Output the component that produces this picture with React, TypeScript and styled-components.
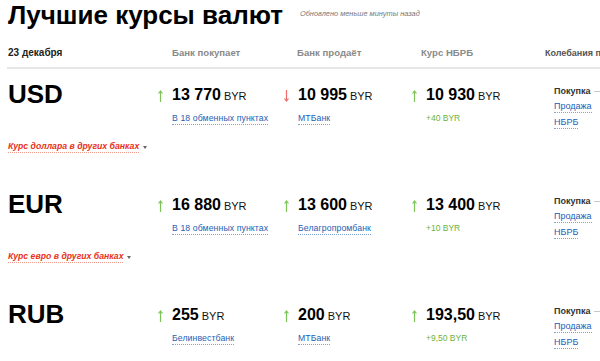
import styled, { createGlobalStyle } from 'styled-components';

const GlobalStyle = createGlobalStyle`
  html, body {
    margin: 0;
    padding: 0;
    background: #fff;
    overflow: hidden;
    font-family: 'Liberation Sans', Arial, sans-serif;
  }
`;

const COLUMNS = '150px 126px 128px 132px 1fr';

const Page = styled.div`
  width: 760px;
  padding-left: 8px;
  color: #000;
`;

const TitleRow = styled.div`
  display: flex;
  align-items: baseline;
  gap: 17px;
  height: 36px;
`;

const Title = styled.h1`
  margin: 0;
  font-size: 26px;
  line-height: 30px;
  font-weight: bold;
`;

const Updated = styled.span`
  font-size: 7.4px;
  font-style: italic;
  color: #777;
  position: relative;
  top: -8px;
`;

const HeaderRow = styled.div`
  display: grid;
  grid-template-columns: ${COLUMNS};
  margin-top: 10px;
  margin-left: -1px;
  padding: 0 0 7px 1px;
  line-height: 14px;
  border-bottom: 2px solid #e6e6e6;
`;

const DateCell = styled.div`
  font-size: 10px;
  font-weight: bold;
  color: #222;
`;

const HeadCell = styled.div<{ $indent: number; $small?: boolean }>`
  padding-left: ${(p) => p.$indent}px;
  font-size: ${(p) => (p.$small ? 9 : 9.6)}px;
  font-weight: bold;
  color: ${(p) => (p.$small ? '#555' : '#8a8a8a')};
  white-space: nowrap;
  overflow: hidden;
`;

const Block = styled.section`
  height: 110px;
  display: flex;
  flex-direction: column;
`;

const Row = styled.div`
  display: grid;
  grid-template-columns: ${COLUMNS};
  margin-top: 10px;
  height: 52px;
`;

const Code = styled.div`
  font-size: 26px;
  line-height: 30px;
  font-weight: bold;
`;

const RateCell = styled.div`
  display: flex;
  align-items: flex-start;
`;

const ArrowBox = styled.div`
  width: 14px;
  margin-top: 9px;
  flex-shrink: 0;
`;

const RateBody = styled.div`
  display: flex;
  flex-direction: column;
  align-items: flex-start;
`;

const Value = styled.div`
  margin-top: 6px;
  line-height: 20px;
  font-size: 16px;
  font-weight: bold;
  white-space: nowrap;
`;

const Unit = styled.span`
  font-size: 11px;
  font-weight: normal;
  margin-left: 3px;
  color: #111;
`;

const Link = styled.a`
  margin-top: 6px;
  font-size: 8.7px;
  line-height: 12px;
  letter-spacing: 0.1px;
  color: #2261b5;
  text-decoration: none;
  border-bottom: 1px dotted #7ea3d6;
  white-space: nowrap;
  cursor: pointer;
`;

const Delta = styled.div`
  margin-top: 6px;
  font-size: 8.5px;
  line-height: 13px;
  color: #6bb43c;
`;

const Swing = styled.div`
  display: flex;
  padding-left: 10px;
  margin-top: 4px;
`;

const SwingLabels = styled.div`
  display: flex;
  flex-direction: column;
  width: 40px;
`;

const SwingItem = styled.div`
  height: 16px;
  display: flex;
  align-items: center;
`;

const SwingText = styled.span<{ $active?: boolean }>`
  font-size: 9px;
  line-height: 11px;
  font-weight: ${(p) => (p.$active ? 'bold' : 'normal')};
  color: ${(p) => (p.$active ? '#333' : '#2261b5')};
  border-bottom: ${(p) => (p.$active ? 'none' : '1px dotted #7ea3d6')};
`;

const OtherBanks = styled.div`
  margin-top: 9px;
  display: flex;
  align-items: center;
  gap: 4px;
  line-height: 14px;
`;

const OtherLink = styled.a`
  font-size: 8.7px;
  font-style: italic;
  font-weight: bold;
  color: #e8321b;
  border-bottom: 1px dotted #f09a8e;
  line-height: 12px;
  cursor: pointer;
`;

const Caret = styled.span`
  width: 0;
  height: 0;
  border-left: 2.5px solid transparent;
  border-right: 2.5px solid transparent;
  border-top: 3px solid #666;
  margin-top: 2px;
`;

const Arrow = ({ up }: { up: boolean }) => (
  <svg width="5" height="12" viewBox="0 0 5 12">
    {up ? (
      <path d="M2.5 1 V12 M0.5 3.5 L2.5 1 L4.5 3.5" stroke="#7cc35a" strokeWidth="1.2" fill="none" />
    ) : (
      <path d="M2.5 0 V11 M0.5 8.5 L2.5 11 L4.5 8.5" stroke="#f06a6a" strokeWidth="1.2" fill="none" />
    )}
  </svg>
);

type Rate = { value: string; up: boolean; link?: string; delta?: string };

type Currency = {
  code: string;
  other?: string;
  buy: Rate;
  sell: Rate;
  nb: Rate;
};

const data: Currency[] = [
  {
    code: 'USD',
    other: 'Курс доллара в других банках',
    buy: { value: '13 770', up: true, link: 'В 18 обменных пунктах' },
    sell: { value: '10 995', up: false, link: 'МТБанк' },
    nb: { value: '10 930', up: true, delta: '+40 BYR' },
  },
  {
    code: 'EUR',
    other: 'Курс евро в других банках',
    buy: { value: '16 880', up: true, link: 'В 18 обменных пунктах' },
    sell: { value: '13 600', up: true, link: 'Белагропромбанк' },
    nb: { value: '13 400', up: true, delta: '+10 BYR' },
  },
  {
    code: 'RUB',
    buy: { value: '255', up: true, link: 'Белинвестбанк' },
    sell: { value: '200', up: true, link: 'МТБанк' },
    nb: { value: '193,50', up: true, delta: '+9,50 BYR' },
  },
];

const RateView = ({ rate }: { rate: Rate }) => (
  <RateCell>
    <ArrowBox>
      <Arrow up={rate.up} />
    </ArrowBox>
    <RateBody>
      <Value>
        {rate.value}
        <Unit>BYR</Unit>
      </Value>
      {rate.link && <Link>{rate.link}</Link>}
      {rate.delta && <Delta>{rate.delta}</Delta>}
    </RateBody>
  </RateCell>
);

export default function App() {
  return (
    <>
      <GlobalStyle />
      <Page>
        <TitleRow>
          <Title>Лучшие курсы валют</Title>
          <Updated>Обновлено меньше минуты назад</Updated>
        </TitleRow>
        <HeaderRow>
          <DateCell>23 декабря</DateCell>
          <HeadCell $indent={14}>Банк покупает</HeadCell>
          <HeadCell $indent={13}>Банк продаёт</HeadCell>
          <HeadCell $indent={9}>Курс НБРБ</HeadCell>
          <HeadCell $indent={1} $small>
            Колебания покупки
          </HeadCell>
        </HeaderRow>
        {data.map((c) => (
          <Block key={c.code}>
            <Row>
              <Code>{c.code}</Code>
              <RateView rate={c.buy} />
              <RateView rate={c.sell} />
              <RateView rate={c.nb} />
              <Swing>
                <SwingLabels>
                  <SwingItem>
                    <SwingText $active>Покупка</SwingText>
                  </SwingItem>
                  <SwingItem>
                    <SwingText>Продажа</SwingText>
                  </SwingItem>
                  <SwingItem>
                    <SwingText>НБРБ</SwingText>
                  </SwingItem>
                </SwingLabels>
                <svg width="160" height="48" viewBox="0 0 160 48">
                  <line x1="0" y1="8.5" x2="160" y2="8.5" stroke="#c8c8c8" strokeWidth="1" />
                </svg>
              </Swing>
            </Row>
            {c.other && (
              <OtherBanks>
                <OtherLink>{c.other}</OtherLink>
                <Caret />
              </OtherBanks>
            )}
          </Block>
        ))}
      </Page>
    </>
  );
}
